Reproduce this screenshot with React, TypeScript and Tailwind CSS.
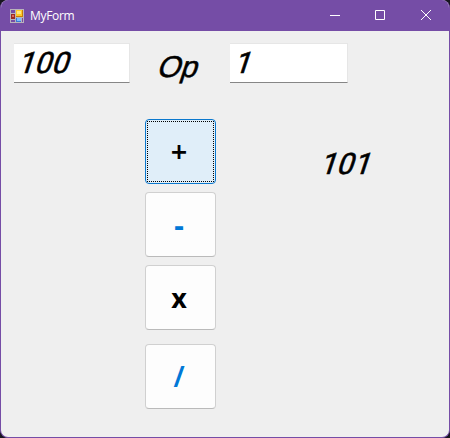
import type { ReactNode } from "react";

function FormIcon() {
  return (
    <svg width="14" height="14" viewBox="0 0 14 14" shapeRendering="crispEdges">
      <path fill="#b9b3ba" d="M0 0h14v14H0z" />
      <path fill="#754da6" d="M1 1h4v3H1zM1 11h4v2H1zM12 9h1v4h-1z" />
      <path fill="#9d2a22" d="M1 5h4v5H1z" />
      <path fill="#e0685a" d="M2 6h2v2H2z" />
      <path fill="#c87c05" d="M6 1h7v7H6z" />
      <path fill="#ffc928" d="M6 1h6v6H6z" />
      <path fill="#ffe680" d="M7 2h4v3H7z" />
      <path fill="#3a78d4" d="M6 9h5v4H6z" />
      <path fill="#7dbcff" d="M7 9h4v3H7z" />
    </svg>
  );
}

function Slanted({ children, className = "" }: { children: ReactNode; className?: string }) {
  return (
    <span
      className={`block origin-bottom -skew-x-[18deg] leading-[38px] text-black ${className}`}
    >
      {children}
    </span>
  );
}

const digits = "text-[29.5px] tracking-[0.3px] font-['Roboto',sans-serif] [-webkit-text-stroke:0.6px_black]";

function Field({ value, className }: { value: string; className: string }) {
  return (
    <div className={`h-10 border-t border-r border-b border-t-[#e6e6e6] border-r-[#e6e6e6] border-b-[#868686] bg-white ${className}`}>
      <Slanted className={digits}>{value}</Slanted>
    </div>
  );
}

function OpButton({ children, className }: { children: ReactNode; className: string }) {
  return (
    <button
      className={`flex h-[65px] w-[71px] items-center justify-center rounded border font-['Noto_Sans',sans-serif] leading-none ${className}`}
    >
      {children}
    </button>
  );
}

const plain = "border-[#d0d0d0] border-b-[#bababa] bg-[#fdfdfd] pr-[3px]";

export default function App() {
  return (
    <div className="h-[438px] w-[450px] bg-[#17151f] font-['Liberation_Sans',Arial,sans-serif]">
      <div className="flex h-full flex-col overflow-hidden rounded-lg border border-t-0 border-[#754da6] bg-[#efefef]">
        <header className="flex h-[31px] shrink-0 items-center bg-[#754da6] pl-[9px] text-white">
          <FormIcon />
          <span className="ml-[6px] font-['Open_Sans','Noto_Sans',sans-serif] text-xs tracking-[-0.3px]">MyForm</span>
          <svg className="ml-auto" width="120" height="31" viewBox="0 0 120 31" fill="none" stroke="white">
            <path d="M1 15.5h10M46.5 10.5h9v9h-9z" />
            <path d="M92 10l10 10M102 10l-10 10" />
          </svg>
        </header>
        <main>
          <div className="flex h-[52px] pt-3 pl-[13px]">
            <Field value="100" className="w-[116px]" />
            <div className="ml-[23px] w-[77px] pt-[5px]">
              <Slanted className="text-[30px] [-webkit-text-stroke:0.5px_black]">Op</Slanted>
            </div>
            <Field value="1" className="w-[118px]" />
          </div>
          <div className="flex pt-9 pl-[144px]">
            <div className="flex flex-col">
              <OpButton className="border-[#0b78cd] bg-[#e0eef9] p-px text-[29px] font-semibold text-black">
                <span className="flex size-full items-center justify-center border border-dotted border-black pr-[3px] pb-[3px]">+</span>
              </OpButton>
              <OpButton className={`mt-2 pt-px text-[30px] font-bold text-[#0078d7] ${plain}`}>-</OpButton>
              <OpButton className={`mt-2 pb-px text-[27px] font-bold text-black ${plain}`}>x</OpButton>
              <OpButton className={`mt-[14px] pb-px text-[28px] font-semibold text-[#0078d7] ${plain}`}>/</OpButton>
            </div>
            <div className="ml-[100px] pt-[26px]">
              <Slanted className={digits}>101</Slanted>
            </div>
          </div>
        </main>
      </div>
    </div>
  );
}
